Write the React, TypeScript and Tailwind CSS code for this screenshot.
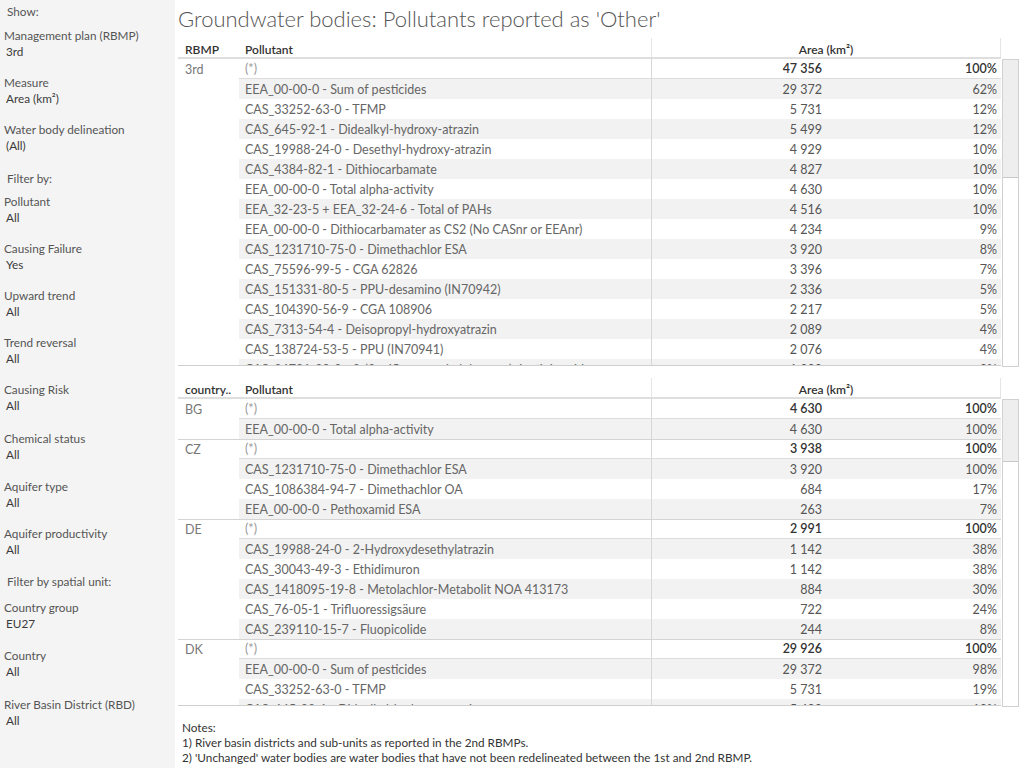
import React from 'react';

type Row = { name: string; area: string; pct: string };
type Group = { label: string; rows: Row[] };

// mt values keep the odd spacing the dashboard has between filter cards
const sidebar: { label: string; value?: string; heading?: boolean; mt: string }[] = [
  { label: 'Show:', heading: true, mt: 'mt-0' },
  { label: 'Management plan (RBMP)', value: '3rd', mt: 'mt-[8px]' },
  { label: 'Measure', value: 'Area (km²)', mt: 'mt-[15px]' },
  { label: 'Water body delineation', value: '(All)', mt: 'mt-[15px]' },
  { label: 'Filter by:', heading: true, mt: 'mt-[17px]' },
  { label: 'Pollutant', value: 'All', mt: 'mt-[7px]' },
  { label: 'Causing Failure', value: 'Yes', mt: 'mt-[15px]' },
  { label: 'Upward trend', value: 'All', mt: 'mt-[15px]' },
  { label: 'Trend reversal', value: 'All', mt: 'mt-[15px]' },
  { label: 'Causing Risk', value: 'All', mt: 'mt-[15px]' },
  { label: 'Chemical status', value: 'All', mt: 'mt-[17px]' },
  { label: 'Aquifer type', value: 'All', mt: 'mt-[16px]' },
  { label: 'Aquifer productivity', value: 'All', mt: 'mt-[15px]' },
  { label: 'Filter by spatial unit:', heading: true, mt: 'mt-[16px]' },
  { label: 'Country group', value: 'EU27', mt: 'mt-[10px]' },
  { label: 'Country', value: 'All', mt: 'mt-[16px]' },
  { label: 'River Basin District (RBD)', value: 'All', mt: 'mt-[17px]' },
];

const rbmpGroups: Group[] = [
  {
    label: '3rd',
    rows: [
      { name: '(*)', area: '47 356', pct: '100%' },
      { name: 'EEA_00-00-0 - Sum of pesticides', area: '29 372', pct: '62%' },
      { name: 'CAS_33252-63-0 - TFMP', area: '5 731', pct: '12%' },
      { name: 'CAS_645-92-1 - Didealkyl-hydroxy-atrazin', area: '5 499', pct: '12%' },
      { name: 'CAS_19988-24-0 - Desethyl-hydroxy-atrazin', area: '4 929', pct: '10%' },
      { name: 'CAS_4384-82-1 - Dithiocarbamate', area: '4 827', pct: '10%' },
      { name: 'EEA_00-00-0 - Total alpha-activity', area: '4 630', pct: '10%' },
      { name: 'EEA_32-23-5 + EEA_32-24-6 - Total of PAHs', area: '4 516', pct: '10%' },
      { name: 'EEA_00-00-0 - Dithiocarbamater as CS2 (No CASnr or EEAnr)', area: '4 234', pct: '9%' },
      { name: 'CAS_1231710-75-0 - Dimethachlor ESA', area: '3 920', pct: '8%' },
      { name: 'CAS_75596-99-5 - CGA 62826', area: '3 396', pct: '7%' },
      { name: 'CAS_151331-80-5 - PPU-desamino (IN70942)', area: '2 336', pct: '5%' },
      { name: 'CAS_104390-56-9 - CGA 108906', area: '2 217', pct: '5%' },
      { name: 'CAS_7313-54-4 - Deisopropyl-hydroxyatrazin', area: '2 089', pct: '4%' },
      { name: 'CAS_138724-53-5 - PPU (IN70941)', area: '2 076', pct: '4%' },
      { name: 'CAS_36791-09-0 - 2-(3-trifluoromethylphenoxy)nicotinic acid', area: '1 300', pct: '3%' },
    ],
  },
];

const countryGroups: Group[] = [
  {
    label: 'BG',
    rows: [
      { name: '(*)', area: '4 630', pct: '100%' },
      { name: 'EEA_00-00-0 - Total alpha-activity', area: '4 630', pct: '100%' },
    ],
  },
  {
    label: 'CZ',
    rows: [
      { name: '(*)', area: '3 938', pct: '100%' },
      { name: 'CAS_1231710-75-0 - Dimethachlor ESA', area: '3 920', pct: '100%' },
      { name: 'CAS_1086384-94-7 - Dimethachlor OA', area: '684', pct: '17%' },
      { name: 'EEA_00-00-0 - Pethoxamid ESA', area: '263', pct: '7%' },
    ],
  },
  {
    label: 'DE',
    rows: [
      { name: '(*)', area: '2 991', pct: '100%' },
      { name: 'CAS_19988-24-0 - 2-Hydroxydesethylatrazin', area: '1 142', pct: '38%' },
      { name: 'CAS_30043-49-3 - Ethidimuron', area: '1 142', pct: '38%' },
      { name: 'CAS_1418095-19-8 - Metolachlor-Metabolit NOA 413173', area: '884', pct: '30%' },
      { name: 'CAS_76-05-1 - Trifluoressigsäure', area: '722', pct: '24%' },
      { name: 'CAS_239110-15-7 - Fluopicolide', area: '244', pct: '8%' },
    ],
  },
  {
    label: 'DK',
    rows: [
      { name: '(*)', area: '29 926', pct: '100%' },
      { name: 'EEA_00-00-0 - Sum of pesticides', area: '29 372', pct: '98%' },
      { name: 'CAS_33252-63-0 - TFMP', area: '5 731', pct: '19%' },
      { name: 'CAS_645-92-1 - Didealkyl-hydroxy-atrazin', area: '5 499', pct: '18%' },
    ],
  },
];

function DataRow({ row, idx }: { row: Row; idx: number }) {
  const total = idx === 0;
  return (
    <div
      className={`flex h-[20px] items-center ${idx % 2 === 1 ? 'bg-[#f2f2f2]' : ''} ${
        total ? 'border-b border-[#dcdcdc]' : ''
      }`}
    >
      <div className={`w-[412px] shrink-0 truncate pl-[6px] pt-[2px] ${total ? 'text-[#9a9a9a]' : 'text-[#666]'}`}>{row.name}</div>
      <div className={`flex h-full flex-1 items-center border-l border-[#d6d6d6] pt-[2px] ${total ? 'font-semibold text-[#333]' : 'text-[#555]'}`}>
        <div className="w-[175px] pr-[5px] text-right">{row.area}</div>
        <div className="w-[175px] pr-[5px] text-right">{row.pct}</div>
      </div>
    </div>
  );
}

function Crosstab({ dimension, groups, thumb }: { dimension: string; groups: Group[]; thumb: number }) {
  return (
    <div className="flex">
      <div className="w-[823px] text-[12.5px]">
        <div className="flex h-[21px] items-center border-b-2 border-[#dedede] pt-[4px] text-[12px] font-semibold text-[#333]">
          <div className="w-[61px] pl-[7px]">{dimension}</div>
          <div className="w-[412px] pl-[6px]">Pollutant</div>
          <div className="-mt-[4px] flex h-[19px] w-[350px] items-center justify-center border-x border-[#e6e6e6] pt-[4px]">
            Area (km²)
          </div>
        </div>
        <div className="h-[307px] overflow-hidden border-b border-[#cfcfcf]">
          {groups.map((g, gi) => (
            <div key={g.label} className={`flex bg-white ${gi > 0 ? 'shadow-[inset_0_1px_0_#d4d4d4]' : ''}`}>
              <div className="w-[61px] shrink-0 pl-[7px] pt-[2px] text-[#777]">{g.label}</div>
              <div className="flex-1">
                {g.rows.map((r, i) => (
                  <DataRow key={r.name + i} row={r} idx={i} />
                ))}
              </div>
            </div>
          ))}
        </div>
      </div>
      <div className="ml-[1px] mt-[21px] flex h-[308px] w-[17px] flex-col border border-[#d0d0d0] bg-white">
        <div className="w-full border-b border-[#c8c8c8] bg-[#eeeeee]" style={{ height: thumb }} />
      </div>
    </div>
  );
}

export default function App() {
  return (
    <div className="flex h-[768px] w-[1024px] overflow-hidden bg-white font-['Lato','Noto_Sans',sans-serif]">
      <aside className="w-[175px] shrink-0 bg-[#f4f4f4] pl-[4px] pt-[4px] text-[11.75px]">
        {sidebar.map((s) =>
          s.heading ? (
            <p key={s.label} className={`${s.mt} pl-[3px] leading-[16px] text-[#555]`}>
              {s.label}
            </p>
          ) : (
            <div key={s.label} className={s.mt}>
              <p className="leading-[16px] text-[#555]">{s.label}</p>
              <p className="pl-[2px] leading-[16px] text-[#3a3a3a]">{s.value}</p>
            </div>
          )
        )}
      </aside>

      <main className="flex-1 pl-[3px]">
        <h1 className="h-[38px] pt-[5px] text-[22px] font-light leading-[28px] text-[#555]">
          Groundwater bodies: Pollutants reported as 'Other'
        </h1>
        <Crosstab dimension="RBMP" groups={rbmpGroups} thumb={118} />
        <div className="h-[11px]" />
        <Crosstab dimension="country.." groups={countryGroups} thumb={62} />
        <div className="pl-[4px] pt-[13px] text-[11.75px] leading-[15px] text-[#333]">
          <p>Notes:</p>
          <p>1) River basin districts and sub-units as reported in the 2nd RBMPs.</p>
          <p>2) 'Unchanged' water bodies are water bodies that have not been redelineated between the 1st and 2nd RBMP.</p>
        </div>
      </main>
    </div>
  );
}
